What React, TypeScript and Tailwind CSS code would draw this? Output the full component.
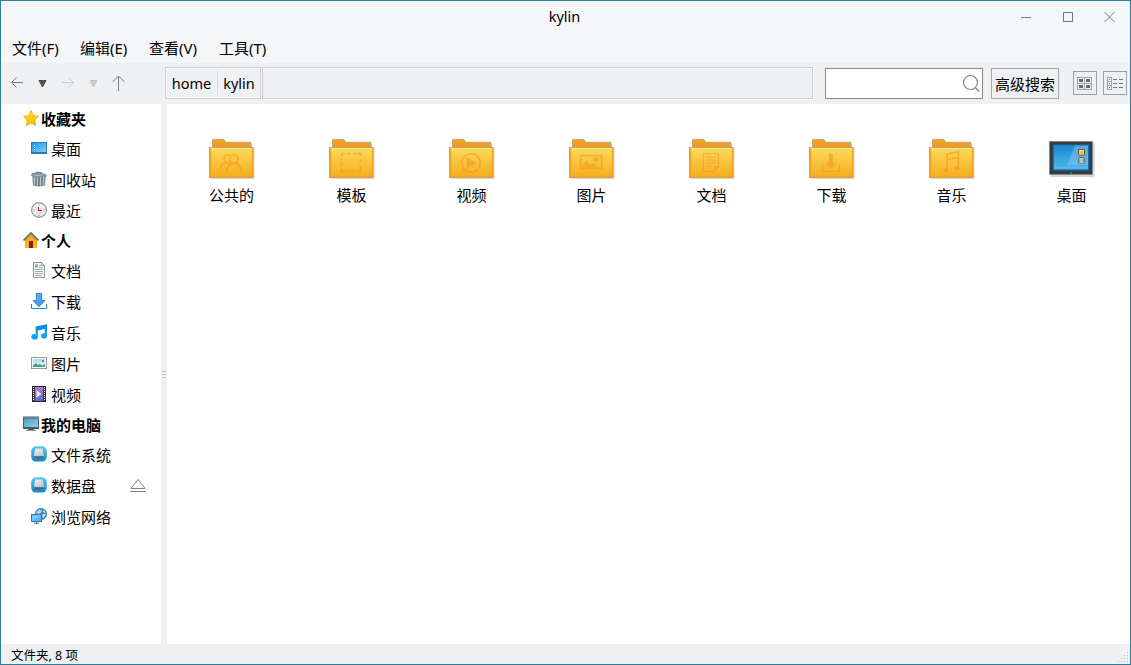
import type { ReactNode } from "react";

type IconProps = { children: ReactNode; size?: number };

function Icon({ children, size = 16 }: IconProps) {
  return (
    <svg width={size} height={size} viewBox={`0 0 ${size} ${size}`} fill="none" className="block shrink-0">
      {children}
    </svg>
  );
}

const starIcon = (
  <Icon>
    <path d="M8 .6l2.3 5 5.2.7-3.800 3.700 1 5.500L8 13l-4.700 2.500 1-5.500L.5 6.300l5.200-.7z" fill="url(#g-star)" stroke="#edb70c" strokeWidth="1" strokeLinejoin="round" />
  </Icon>
);

const desktopIcon = (
  <Icon>
    <rect y="2" width="16" height="12" fill="#3576a0" />
    <rect x="1" y="3" width="14" height="9" fill="url(#g-screen)" />
    <path d="M3.5 5v1M3.5 7v1M3.5 9v1" stroke="#d9f0ff" />
  </Icon>
);

const trashIcon = (
  <Icon>
    <path d="M1.2 5h13.600l-.8 9.600q-6 1.900-12 0z" fill="#7f939c" />
    <path d="M3.5 6l.6 8M6.500 6v8.500M9.500 6v8.500M12.500 6l-.6 8" stroke="#bccbd1" strokeWidth="1.2" />
    <path d="M5 6v8M8 6v9M11 6v8" stroke="#526b77" strokeWidth=".9" />
    <path d="M.3 3.200Q1 1.500 5 1.400V.5l6 .7v1q4 .2 4.800 2.400v1.100Q8 3.600.3 5z" fill="#6d858f" />
    <path d="M1 3.300q6-1 13.800 1" stroke="#a2b5bd" strokeWidth=".8" />
  </Icon>
);

const clockIcon = (
  <Icon>
    <circle cx="8" cy="8" r="7.400" fill="url(#g-clock)" stroke="#929292" strokeWidth="1.1" />
    <circle cx="8" cy="8" r="5.800" stroke="#f7f7f7" />
    <path d="M8 2.200v1M8 13v1M2.200 8h1M13 8h1" stroke="#777" strokeWidth=".8" />
    <path d="M7.500 5v3.500H11" stroke="#c9281b" strokeWidth="1.2" />
  </Icon>
);

const homeIcon = (
  <Icon>
    <path d="M2 8l6-6 6 6v8H2z" fill="url(#g-home)" />
    <path d="M6 9h4v7H6z" fill="#95180a" />
    <path d="M.5 8.500L8 1l7.500 7.500" stroke="#686868" strokeWidth="1.7" />
    <path d="M2 9.200l6-6 6 6" stroke="#ba8b22" strokeWidth=".5" />
  </Icon>
);

const documentIcon = (
  <Icon>
    <path d="M2.500.5h8l3 3v12h-11z" fill="#f7f8f8" stroke="#929596" />
    <path d="M10.500.5v3h3" fill="#ddd" stroke="#929596" strokeWidth=".8" />
    <path d="M4 2.500h3v3H4z" fill="#86a9b4" />
    <path d="M8 3.500h2M8 5.500h4M4 7.500h8M4 9.500h8M4 11.500h8M4 13.500h7" stroke="#86a9b4" strokeWidth=".9" />
  </Icon>
);

const downloadIcon = (
  <Icon>
    <path d="M5.300.5h5.400v7h3.300L8 13.700 2 7.500h3.300z" fill="url(#g-down)" stroke="#2f7fc4" strokeWidth=".9" />
    <path d="M.5 11v4.500h15V11" stroke="#2f80c4" />
  </Icon>
);

const musicIcon = (
  <Icon>
    <path d="M4.600 2.500L16 .2V12a3 2.600 0 1 1-2.200-2.500V5L6.800 6.400v6.600a3.300 2.800 0 1 1-2.200-2.700z" fill="url(#g-music)" />
  </Icon>
);

const pictureIcon = (
  <Icon>
    <rect x=".5" y="2.500" width="15" height="11" fill="#fff" stroke="#999" />
    <path d="M2 4h12v8H2z" fill="url(#g-sky)" />
    <path d="M2 12v-1.500l3-2.500 2 2 1.500-1 3 1.500L14 9v3z" fill="#43a080" />
    <rect x="11" y="5" width="2" height="2" fill="#f25a24" />
  </Icon>
);

const videoIcon = (
  <Icon>
    <rect x="1.500" y=".5" width="13" height="15" fill="#393b40" stroke="#22242b" />
    <rect x="4" y="1" width="8" height="14" fill="url(#g-video)" />
    <path d="M2.500 1v14M13.500 1v14" stroke="#fff" strokeDasharray="1 1" />
    <path d="M5.500 4.200v7.500L10.500 8z" fill="#f2edf5" />
  </Icon>
);

const computerIcon = (
  <Icon>
    <rect x="0" y=".5" width="16" height="12.500" fill="#4f5960" />
    <path d="M1 2.500h14v8.500H1z" fill="url(#g-computer)" />
    <path d="M0 1h16" stroke="#a5abb0" />
    <path d="M5 13h6v1H5z" fill="#525a60" />
    <path d="M3 14.500h10" stroke="#8c9092" />
  </Icon>
);

const driveIcon = (
  <Icon>
    <rect x=".2" y=".2" width="15.600" height="15.400" rx="5" fill="url(#g-drive)" />
    <path d="M4.400 2.600h7.200l1.400 7.100H3z" fill="url(#g-metal)" />
    <path d="M3 9.500h10V12q-5 1-10 0z" fill="#53616b" />
    <path d="M3 9.700h10" stroke="#f4f4f4" strokeWidth=".7" />
  </Icon>
);

const networkIcon = (
  <Icon>
    <circle cx="10" cy="6" r="5.800" fill="#3e8dc0" stroke="#286b9c" strokeWidth=".5" />
    <path d="M5 4.500l3.500-3L11 3 9.500 5 7 6zM12 1.500l2.800 2.700-1.600.8L12 3zM11 7l3-1.800.8 1.300-2 3.500-1.500-1z" fill="#b9dbed" />
    <rect x=".5" y="6.500" width="10" height="7" fill="#62b4eb" stroke="#3776a7" />
    <path d="M1.500 7.500h8L1.500 12z" fill="#8bccf4" />
    <path d="M3 15.300h5M5.500 14v1.500" stroke="#4f7895" />
  </Icon>
);

const glyphs: Record<string, ReactNode> = {
  people: (
    <>
      <circle cx="27" cy="22.700" r="4.200" />
      <path d="M22.500 26.300a4 4 0 1 1 .8-7M14 32.500q0-4.500 5-6.100M19.500 35.500c.4-5.500 2.800-8.400 7.400-8.400s7 2.900 7.500 8.400" />
    </>
  ),
  template: (
    <path d="M14.500 20.500v-3h3M20.500 17.500h3M26.500 17.500h3M30.500 17.500h3v3M33.500 23.500v3M33.500 29.500v6h-3M27.500 35.500h-3M21.500 35.500h-3M17.500 35.500h-3v-3M14.500 29.500v-3M14.500 24.500v-2" />
  ),
  video: (
    <>
      <circle cx="24" cy="27" r="9.300" />
      <path d="M20.500 22.500v9l7.500-4.500z" fill="#f4981b" />
    </>
  ),
  picture: (
    <>
      <rect x="13.600" y="19.500" width="21" height="13" />
      <path d="M14 32v-1l5.500-6 4 4 2.500-2 4 5z" fill="#f4981b" strokeWidth=".4" />
      <circle cx="29" cy="23.500" r="2" fill="#f4981b" strokeWidth="1" />
    </>
  ),
  document: (
    <path d="M16.500 17.500h15v13.300l-4.300 4.700H16.500zM18.500 21h11M18.500 24h11M18.500 27h11M18.500 30h6M31 31h-4v4" strokeWidth="1.2" />
  ),
  download: (
    <>
      <path d="M22.200 18h3.600v9h3.700L24 33l-5.500-6h3.700z" fill="#f4981b" strokeWidth=".3" />
      <path d="M15.500 28.500v6.800h17v-6.800" strokeWidth="1.2" />
    </>
  ),
  music: (
    <>
      <path d="M20 34V18.200l11.500-2.600v16M20 24l11.500-2.800" />
      <ellipse cx="18.500" cy="34.500" rx="2.100" ry="1.700" fill="#f4981b" strokeWidth=".6" />
      <ellipse cx="30" cy="32" rx="2.100" ry="1.700" fill="#f4981b" strokeWidth=".6" />
    </>
  ),
};

function FolderIcon({ glyph }: { glyph: string }) {
  return (
    <Icon size={48}>
      <path d="M6 4.500h11l2.500 3.300H45V12h2.500v31H3" fill="#9b9b9b" opacity=".4" />
      <path d="M5.500 12V3.300h10.800L19 6.300h25V12z" fill="url(#g-tab)" stroke="#b3a28f" strokeWidth=".9" />
      <rect x="2.500" y="11.500" width="43.500" height="30" fill="url(#g-folder)" stroke="#b3a38c" />
      <path d="M3.500 12.500v28.500h42V12.500" stroke="#f7a11d" />
      <path d="M4 12.500h41" stroke="#ffe788" />
      <g stroke="#f4981b" strokeWidth="1.600" opacity=".6">{glyphs[glyph]}</g>
    </Icon>
  );
}

const bigDesktopIcon = (
  <Icon size={48}>
    <rect x="4" y="7" width="43.500" height="34" fill="#aaa" opacity=".5" />
    <rect x="2.500" y="5.500" width="43" height="33" fill="#343d44" stroke="#828a8e" strokeWidth=".8" />
    <rect x="6" y="8.500" width="36" height="26" fill="#1475b6" />
    <path d="M7 9.500h34v20H7z" fill="url(#g-monitor)" />
    <path d="M28 9.500h13v20H20z" fill="#8bc5e3" opacity=".5" />
    <path d="M7 29.500h34v3.700H7z" fill="#53b6eb" />
    <rect x="31" y="13" width="7" height="6.500" rx="1" fill="#695f43" />
    <path d="M32 14h5v4.800h-5z" fill="#fac33d" />
    <path d="M32 14.500h5" stroke="#fde28a" />
    <rect x="31" y="21" width="7" height="6.500" rx="1" fill="#637987" />
    <path d="M32 22h5v1h-5zm.5 1h4v4h-4z" fill="#b6c2c9" />
    <path d="M23 37h2" stroke="#118cb9" strokeWidth="1.700" />
  </Icon>
);

function Gradient({ id, from, to, diagonal = false }: { id: string; from: string; to: string; diagonal?: boolean }) {
  return (
    <linearGradient id={id} x1="0" y1="0" x2={diagonal ? "1" : "0"} y2="1">
      <stop stopColor={from} />
      <stop offset="1" stopColor={to} />
    </linearGradient>
  );
}

function Gradients() {
  return (
    <svg width="0" height="0" className="absolute">
      <defs>
        <Gradient id="g-star" from="#f9dc2e" to="#f2bb09" />
        <Gradient id="g-screen" from="#159bf2" to="#82cbf9" diagonal />
        <Gradient id="g-clock" from="#fafafa" to="#d8d8d8" />
        <Gradient id="g-home" from="#f5ab0c" to="#f3b71c" />
        <Gradient id="g-down" from="#58adf2" to="#3796e5" />
        <Gradient id="g-music" from="#0688e8" to="#16a6f7" />
        <Gradient id="g-sky" from="#a5dbf8" to="#eef9fd" />
        <Gradient id="g-video" from="#b779d4" to="#546cd2" />
        <Gradient id="g-computer" from="#4c9fc8" to="#8dd1ee" diagonal />
        <Gradient id="g-drive" from="#5fc8f7" to="#0888cf" />
        <Gradient id="g-metal" from="#f5f5f5" to="#bebebe" diagonal />
        <Gradient id="g-tab" from="#f6a41c" to="#f29812" />
        <Gradient id="g-folder" from="#fbdb5d" to="#f6ac1b" />
        <Gradient id="g-monitor" from="#1b88d0" to="#45b1ed" />
      </defs>
    </svg>
  );
}

const groups = [
  {
    label: "收藏夹",
    icon: starIcon,
    items: [
      { label: "桌面", icon: desktopIcon },
      { label: "回收站", icon: trashIcon },
      { label: "最近", icon: clockIcon },
    ],
  },
  {
    label: "个人",
    icon: homeIcon,
    items: [
      { label: "文档", icon: documentIcon },
      { label: "下载", icon: downloadIcon },
      { label: "音乐", icon: musicIcon },
      { label: "图片", icon: pictureIcon },
      { label: "视频", icon: videoIcon },
    ],
  },
  {
    label: "我的电脑",
    icon: computerIcon,
    items: [
      { label: "文件系统", icon: driveIcon },
      { label: "数据盘", icon: driveIcon, ejectable: true },
      { label: "浏览网络", icon: networkIcon },
    ],
  },
];

const files = [
  { label: "公共的", icon: <FolderIcon glyph="people" /> },
  { label: "模板", icon: <FolderIcon glyph="template" /> },
  { label: "视频", icon: <FolderIcon glyph="video" /> },
  { label: "图片", icon: <FolderIcon glyph="picture" /> },
  { label: "文档", icon: <FolderIcon glyph="document" /> },
  { label: "下载", icon: <FolderIcon glyph="download" /> },
  { label: "音乐", icon: <FolderIcon glyph="music" /> },
  { label: "桌面", icon: bigDesktopIcon },
];

function TitleBar() {
  return (
    <header className="flex h-[31px] shrink-0 items-center">
      <div className="w-[125px]" />
      <h1 className="flex-1 text-center text-[14.5px] leading-none">kylin</h1>
      <div className="flex w-[127px] items-center gap-[25px] pl-[17px]">
        <Icon><path d="M1 8.500h10" stroke="#808285" /></Icon>
        <Icon><path d="M2.500 3.500h9v9h-9z" stroke="#717376" /></Icon>
        <Icon><path d="M2.500 3l10 10M12.500 3l-10 10" stroke="#808285" /></Icon>
      </div>
    </header>
  );
}

function MenuBar() {
  return (
    <nav className="flex h-[31px] shrink-0 items-center pt-px pl-[11px]">
      <span className="w-[68px]">文件(F)</span>
      <span className="w-[69px]">编辑(E)</span>
      <span className="w-[70px]">查看(V)</span>
      <span>工具(T)</span>
    </nav>
  );
}

function Toolbar() {
  return (
    <div className="flex h-[41px] shrink-0 bg-[#eff0f2]">
      <svg width="164" height="41" viewBox="1 63 164 41" fill="none" className="block shrink-0">
        <path d="M23 82.500H11.500M16.500 77.500l-5 5 5 5M112.500 82l6-6 6 6M118.500 76v15" stroke="#7d7e80" />
        <path d="M62 82.500h11.500M68.500 77.500l5 5-5 5" stroke="#cccdcf" />
        <path d="M39 80.500h7l-3.500 6.500z" fill="#555" stroke="#333" strokeWidth=".8" />
        <path d="M90 80.500h7l-3.500 6.500z" fill="#ccc" stroke="#bbb" strokeWidth=".8" />
      </svg>
      <div className="mt-1 flex h-8 w-24 border border-[#cbcdd1] text-[14.5px] shadow-[inset_0_0_0_1px_#f8f8f9,1px_0_0_#fafafb]">
        <span className="flex w-[51px] items-center justify-center">home</span>
        <span className="my-[3px] w-px bg-[#d9dadd]" />
        <span className="flex flex-1 items-center justify-center">kylin</span>
      </div>
      <div className="mt-1 ml-px h-8 w-[551px] border border-[#cbcdd1] shadow-[inset_0_1px_0_#fafafb,1px_1px_0_#fafafb]" />
      <div className="mt-[5px] ml-3 flex h-[31px] w-[158px] items-center justify-end border border-[#85898e] bg-white">
        <svg width="20" height="20" viewBox="0 0 20 20" fill="none" className="block">
          <circle cx="8.500" cy="8.500" r="7" stroke="#808285" strokeWidth="1.200" />
          <path d="M13 13.500l4.300 4" stroke="#808285" strokeWidth="1.200" />
        </svg>
      </div>
      <button className="mt-[5px] ml-2 flex h-[31px] w-[68px] items-center justify-center border border-[#a3a6ab]">高级搜索</button>
      <button className="mt-2 ml-3.5 flex size-6 items-center justify-center border border-[#9da0a5]">
        <svg width="22" height="22" viewBox="0 0 22 22" fill="none">
          <rect x="3.500" y="5.500" width="14" height="12" stroke="#a3a5a8" />
          <path d="M10.500 6v11M4 11.500h13" stroke="#a3a5a8" />
          <path d="M5 7h4v3H5zM12 7h4v3h-4zM5 13h4v3H5zM12 13h4v3h-4z" fill="#67696b" />
        </svg>
      </button>
      <button className="mt-2 ml-1.5 flex size-6 items-center justify-center border border-[#9da0a5]">
        <svg width="22" height="22" viewBox="0 0 22 22" fill="none">
          <rect x="3.500" y="5.500" width="4" height="12" stroke="#a3a5a8" />
          <path d="M5 7.500h1M5 11.500h1M5 15.500h1M9 7.500h4M15 7.500h4M9 11.500h4M15 11.500h4M9 15.500h4M15 15.500h4" stroke="#77797b" />
          <path d="M4 9.500h3M4 13.500h3" stroke="#a3a5a8" />
        </svg>
      </button>
    </div>
  );
}

function Sidebar() {
  return (
    <aside className="w-[160px] shrink-0 bg-white pt-px">
      {groups.map((group) => (
        <section key={group.label}>
          <h2 className="flex h-[29px] items-start gap-0.5 pt-[5px] pl-[22px] leading-[19px] font-bold">
            {group.icon}
            <span>{group.label}</span>
          </h2>
          {group.items.map((item) => (
            <div key={item.label} className="flex h-[31px] items-start gap-1 pt-1.5 pl-[30px] leading-[19px]">
              {item.icon}
              <span>{item.label}</span>
              {"ejectable" in item && (
                <svg width="16" height="16" viewBox="0 0 16 16" fill="none" className="mr-[15px] ml-auto block">
                  <path d="M1 11.500h14L8 2.500zM0 14.500h16" stroke="#808284" />
                </svg>
              )}
            </div>
          ))}
        </section>
      ))}
    </aside>
  );
}

export default function App() {
  return (
    <div className="flex h-[665px] w-[1131px] flex-col overflow-hidden border border-[#2f7c9d] bg-[#f5f6f8] font-['Noto_Sans','Noto_Sans_CJK_SC',sans-serif] text-[15px] leading-5 text-black">
      <Gradients />
      <TitleBar />
      <MenuBar />
      <Toolbar />
      <main className="flex min-h-0 flex-1">
        <Sidebar />
        <div className="flex w-1.5 shrink-0 flex-col items-center justify-center gap-0.5 bg-[#eff0f2]">
          <span className="h-px w-1 bg-[#c5c6c9]" />
          <span className="h-px w-1 bg-[#c5c6c9]" />
          <span className="h-px w-1 bg-[#c5c6c9]" />
        </div>
        <div className="flex min-w-0 flex-1 items-start overflow-hidden bg-white pt-8 pl-1">
          {files.map((file) => (
            <div key={file.label} className="flex w-[120px] shrink-0 flex-col items-center">
              {file.icon}
              <span className="mt-px pl-px">{file.label}</span>
            </div>
          ))}
        </div>
      </main>
      <footer className="flex h-5 shrink-0 items-center justify-between bg-[#eff0f2] pl-2.5 text-[12.5px]">
        <span className="pt-1">文件夹, 8 项</span>
        <svg width="12" height="20" viewBox="0 0 12 20" className="block">
          <path d="M9 8h1v1H9zM9 11h1v1H9zM6 11h1v1H6zM9 14h1v1H9zM6 14h1v1H6zM3 14h1v1H3zM9 17h1v1H9zM6 17h1v1H6zM3 17h1v1H3zM0 17h1v1H0z" fill="#bdbfc1" />
        </svg>
      </footer>
    </div>
  );
}
